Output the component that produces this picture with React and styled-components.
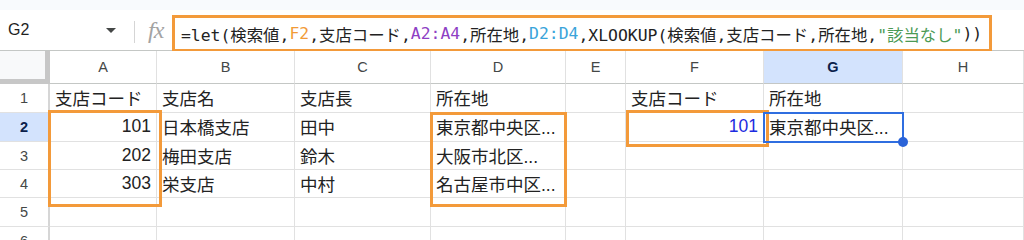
import React from 'react';
import styled, { createGlobalStyle } from 'styled-components';

const GlobalStyle = createGlobalStyle`
  html, body {
    margin: 0;
    padding: 0;
    background: #ffffff;
  }
`;

const COLS = ['A', 'B', 'C', 'D', 'E', 'F', 'G', 'H'];
const COL_WIDTHS = [107, 138, 136, 135, 60, 138, 139, 121];
const ROW_HEIGHTS = [29, 29, 28, 28, 29, 29];

const ROWS = [
  ['支店コード', '支店名', '支店長', '所在地', '', '支店コード', '所在地', ''],
  [101, '日本橋支店', '田中', '東京都中央区...', '', 101, '東京都中央区...', ''],
  [202, '梅田支店', '鈴木', '大阪市北区...', '', '', '', ''],
  [303, '栄支店', '中村', '名古屋市中区...', '', '', '', ''],
  ['', '', '', '', '', '', '', ''],
  ['', '', '', '', '', '', '', '']
];

const ACTIVE_COL = 6;
const ACTIVE_ROW = 1;

// formula tokens: [text, colour]
const FORMULA = [
  ['=let(検索値,', null],
  ['F2', '#f29b37'],
  [',支店コード,', null],
  ['A2:A4', '#8e3fc4'],
  [',所在地,', null],
  ['D2:D4', '#3aa4da'],
  [',XLOOKUP(検索値,支店コード,所在地,', null],
  ['"該当なし"', '#4b9a55'],
  ['))', null]
];

// orange annotation boxes, in sheet coordinates
const MARKS = [
  { x: 48, y: 59, w: 114, h: 97 },
  { x: 430, y: 61, w: 137, h: 95 },
  { x: 626, y: 59, w: 143, h: 37 }
];

const Page = styled.div`
  width: 1024px;
  height: 240px;
  overflow: hidden;
  display: flex;
  flex-direction: column;
  background: #ffffff;
`;

const TopBand = styled.div`
  height: 10px;
  background: #f8fafd;
`;

const FormulaBar = styled.div`
  height: 41px;
  box-sizing: border-box;
  display: flex;
  align-items: flex-start;
  border-bottom: 1px solid #c4c7c5;
`;

const NameBox = styled.div`
  width: 134px;
  height: 40px;
  box-sizing: border-box;
  padding: 0 18px 0 8px;
  display: flex;
  align-items: center;
  justify-content: space-between;
  font-family: 'Liberation Sans', Arial, sans-serif;
  font-size: 16px;
  color: #1f1f1f;
`;

const Divider = styled.div`
  width: 1px;
  height: 22px;
  margin-top: 11px;
  background: #d5d5d5;
`;

const Fx = styled.div`
  width: 37px;
  height: 40px;
  box-sizing: border-box;
  padding-left: 13px;
  display: flex;
  align-items: center;
  font-family: 'Liberation Serif', 'Times New Roman', serif;
  font-style: italic;
  font-size: 24px;
  color: #a3a3a3;
  letter-spacing: -1px;
`;

const FormulaBox = styled.div`
  width: 820px;
  height: 37px;
  margin-top: 5px;
  box-sizing: border-box;
  border: 3px solid #f39a3a;
  padding-left: 6px;
  display: flex;
  align-items: center;
  white-space: nowrap;
  font-family: 'DejaVu Sans Mono', 'Noto Sans CJK JP', monospace;
  font-size: 16.4px;
  color: #222222;
`;

const Token = styled.span`
  color: ${p => p.$color || '#222222'};
`;

const Sheet = styled.div`
  position: relative;
  flex: 1;
  display: grid;
  grid-template-columns: 50px ${COL_WIDTHS.map(w => `${w}px`).join(' ')};
  grid-template-rows: 33px ${ROW_HEIGHTS.map(h => `${h}px`).join(' ')};
  overflow: hidden;
`;

const Corner = styled.div`
  box-sizing: border-box;
  background: #f8f9fa;
  border-right: 5px solid #c7c7c7;
  border-bottom: 5px solid #c7c7c7;
`;

const ColHeader = styled.div`
  box-sizing: border-box;
  display: flex;
  align-items: center;
  justify-content: center;
  border-right: 1px solid #e1e1e1;
  border-bottom: 1px solid #c4c7c5;
  background: ${p => (p.$active ? '#d3e3fd' : '#ffffff')};
  font-family: 'Liberation Sans', Arial, sans-serif;
  font-size: 14.5px;
  font-weight: ${p => (p.$active ? 700 : 400)};
  color: ${p => (p.$active ? '#0b1f4b' : '#444746')};
`;

const RowHeader = styled.div`
  box-sizing: border-box;
  display: flex;
  align-items: center;
  justify-content: center;
  border-right: 2px solid #d6d6d6;
  border-bottom: 1px solid #e1e1e1;
  background: ${p => (p.$active ? '#d3e3fd' : '#ffffff')};
  font-family: 'Liberation Sans', Arial, sans-serif;
  font-size: 14.5px;
  font-weight: ${p => (p.$active ? 700 : 400)};
  color: ${p => (p.$active ? '#0b1f4b' : '#444746')};
`;

const Cell = styled.div`
  box-sizing: border-box;
  display: flex;
  align-items: center;
  justify-content: ${p => (p.$numeric ? 'flex-end' : 'flex-start')};
  padding: 0 5px 1px 5px;
  border-right: 1px solid #e1e1e1;
  border-bottom: 1px solid #e1e1e1;
  white-space: nowrap;
  overflow: hidden;
  font-family: 'Liberation Sans', 'Noto Sans CJK JP', sans-serif;
  font-size: 17.5px;
  color: ${p => p.$color || '#222222'};
`;

const Mark = styled.div`
  position: absolute;
  left: ${p => p.$x}px;
  top: ${p => p.$y}px;
  width: ${p => p.$w}px;
  height: ${p => p.$h}px;
  box-sizing: border-box;
  border: 3px solid #f39a3a;
  pointer-events: none;
`;

const Selection = styled.div`
  position: absolute;
  left: ${p => p.$x}px;
  top: ${p => p.$y}px;
  width: ${p => p.$w}px;
  height: ${p => p.$h}px;
  box-sizing: border-box;
  border: 2px solid #2f6ee0;
  pointer-events: none;
`;

const Handle = styled.div`
  position: absolute;
  right: -6px;
  bottom: -6px;
  width: 10px;
  height: 10px;
  border-radius: 50%;
  background: #2a63d8;
`;

const Caret = () => (
  <svg width="10" height="5" viewBox="0 0 10 5">
    <polygon points="0,0 10,0 5,5" fill="#444746" />
  </svg>
);

const App = () => {
  const colLeft = i => 50 + COL_WIDTHS.slice(0, i).reduce((a, b) => a + b, 0);
  const rowTop = i => 33 + ROW_HEIGHTS.slice(0, i).reduce((a, b) => a + b, 0);

  return (
    <Page>
      <GlobalStyle />
      <TopBand />
      <FormulaBar>
        <NameBox>
          <span>G2</span>
          <Caret />
        </NameBox>
        <Divider />
        <Fx>fx</Fx>
        <FormulaBox>
          {FORMULA.map(([text, color], i) => (
            <Token key={i} $color={color}>
              {text}
            </Token>
          ))}
        </FormulaBox>
      </FormulaBar>
      <Sheet>
        <Corner />
        {COLS.map((c, i) => (
          <ColHeader key={c} $active={i === ACTIVE_COL}>
            {c}
          </ColHeader>
        ))}
        {ROWS.map((row, r) => (
          <React.Fragment key={r}>
            <RowHeader $active={r === ACTIVE_ROW}>{r + 1}</RowHeader>
            {row.map((v, c) => (
              <Cell
                key={c}
                $numeric={typeof v === 'number'}
                $color={r === 1 && c === 5 ? '#1d2be0' : null}
              >
                {v}
              </Cell>
            ))}
          </React.Fragment>
        ))}
        {MARKS.map((m, i) => (
          <Mark key={i} $x={m.x} $y={m.y} $w={m.w} $h={m.h} />
        ))}
        <Selection
          $x={colLeft(ACTIVE_COL) - 1}
          $y={rowTop(ACTIVE_ROW) - 1}
          $w={COL_WIDTHS[ACTIVE_COL] + 2}
          $h={ROW_HEIGHTS[ACTIVE_ROW] + 2}
        >
          <Handle />
        </Selection>
      </Sheet>
    </Page>
  );
};

export default App;
